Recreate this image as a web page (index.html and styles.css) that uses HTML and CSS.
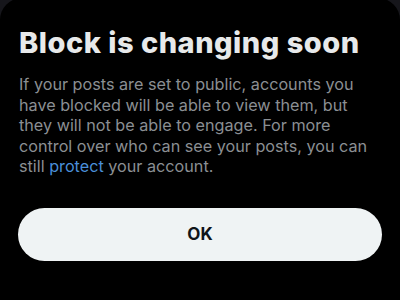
FILE: index.html
```html
<!DOCTYPE html>
<html>
<head>
<meta charset="utf-8">
<link rel="stylesheet" href="styles.css">
</head>
<body>
<div class="sheet">
  <h1 class="title">Block is changing soon</h1>
  <p class="body">If your posts are set to public, accounts you have blocked will be able to view them, but they will not be able to engage. For more control over who can see your posts, you can still <span class="link">protect</span> your account.</p>
  <button class="ok">OK</button>
</div>
</body>
</html>
```

FILE: styles.css
```css
html, body {
  margin: 0;
  padding: 0;
  background: #16161b;
  width: 400px;
  height: 300px;
  overflow: hidden;
}
.sheet {
  background: #000;
  border-radius: 22px 22px 0 0;
  margin-top: -2px;
  height: 310px;
  box-sizing: border-box;
  padding: 28px 18px 0 19px;
  font-family: Inter, "Noto Sans", sans-serif;
}
.title {
  margin: 0;
  color: #e7e9ea;
  font-size: 29px;
  font-weight: 800;
  letter-spacing: 0.5px;
  line-height: 34px;
}
.body {
  margin: 14px 0 0 0;
  color: #8b8f93;
  font-size: 16.2px;
  line-height: 20.5px;
  font-weight: 400;
}
.link {
  color: #4a8fd9;
}
.ok {
  display: block;
  width: 364px;
  height: 53px;
  margin: 31px 0 0 -1px;
  border: none;
  border-radius: 27px;
  background: #eff3f4;
  color: #0f1419;
  font-family: Inter, "Noto Sans", sans-serif;
  font-weight: 700;
  font-size: 17px;
}
```
